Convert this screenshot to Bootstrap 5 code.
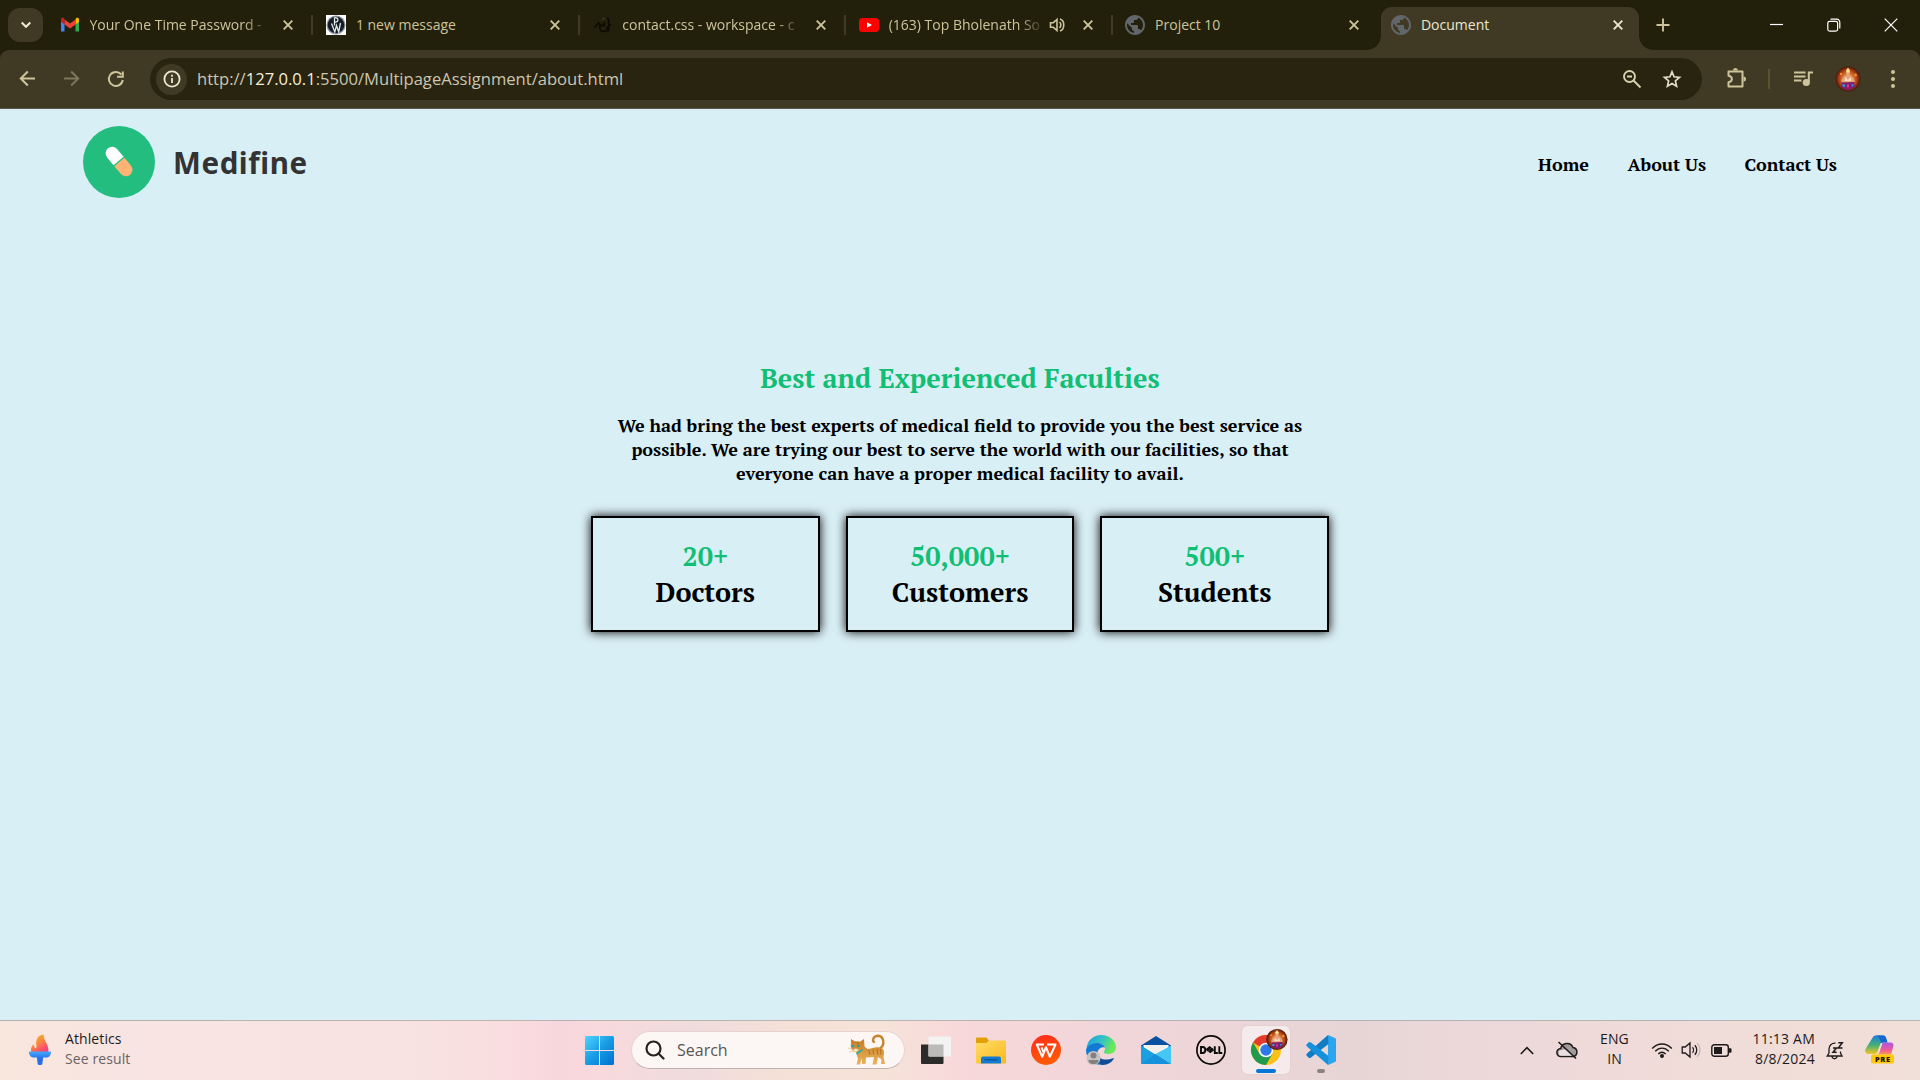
<!DOCTYPE html>
<html lang="en">
<head>
<meta charset="utf-8">
<title>Document</title>
<link href="https://cdn.jsdelivr.net/npm/bootstrap@5.3.0/dist/css/bootstrap.min.css" rel="stylesheet">
<style>
  body { font-family: "Open Sans", "Noto Sans", sans-serif; background: #d9eff6; width: 1920px; height: 1080px; overflow: hidden; }
  svg { display: block; flex: none; }
  /* browser chrome */
  .tab-strip { height: 50px; background: #22200b; color: #cdc49c; font-size: 14px; line-height: 20px; padding-left: 8px; }
  .tab-search { width: 35px; height: 34px; border-radius: 12px; background: #403a24; margin-right: 3px; }
  .browser-tab { width: 266.4px; height: 34px; padding: 0 14px 0 13.5px; position: relative; }
  .browser-tab.divided::after { content: ""; position: absolute; right: -1px; top: 7px; width: 2px; height: 20px; background: #403a24; }
  .tab-icon { width: 20px; height: 20px; margin-right: 10px; }
  .tab-title { height: 20px; white-space: nowrap; }
  .fade-end { -webkit-mask-image: linear-gradient(90deg, #000 calc(100% - 26px), transparent); mask-image: linear-gradient(90deg, #000 calc(100% - 26px), transparent); }
  .browser-tab.current { height: 43px; align-self: flex-end; margin-left: 3px; padding: 0 15px 7px 10px; width: 258px; background: #403a24; border-radius: 11px 11px 0 0; color: #ece6cf; }
  .browser-tab.current::before, .browser-tab.current::after { content: ""; position: absolute; bottom: 0; width: 14px; height: 14px; }
  .browser-tab.current::before { left: -14px; background: radial-gradient(circle at 0 0, transparent 13.5px, #403a24 14px); }
  .browser-tab.current::after { right: -14px; background: radial-gradient(circle at 100% 0, transparent 13.5px, #403a24 14px); }
  .window-btn { width: 57px; }
  .strip-back { background: #22200b; }
  .tool-row { height: 59px; background: #403a24; border-radius: 9px 9px 0 0; border-bottom: 1px solid #5b5646; padding-left: 7px; }
  .tool-btn { width: 44.5px; padding-right: 4px; }
  .nav-tools { width: 143px; }
  .address { width: 1552px; height: 42px; border-radius: 21px; background: #29240f; padding: 0 18px 0 6px; font-size: 16.6px; line-height: 24px; color: #cbc6b2; }
  .site-info { width: 31px; height: 31px; background: #403a24; margin-right: 10px; }
  .address b { font-weight: 400; color: #f4efd9; }
  /* page */
  .site { height: 911px; font-family: "PT Serif", "Liberation Serif", serif; font-weight: 700; color: #000; }
  .site-head { padding: 17px 83px 0; height: 107px; }
  .brand-name { font: 700 29.5px/40px "Noto Sans", "Open Sans", sans-serif; color: #333; margin-left: 18px; letter-spacing: .6px; padding-top: 1px; }
  .site-nav { gap: 38.5px; font-size: 18px; line-height: 24px; padding-top: 4px; margin-top: 22px; }
  .site-nav a { color: #000; text-decoration: none; }
  .faculty { width: 738.4px; padding-top: 144px; }
  .faculty h2, .stat-box { font-size: 27px; line-height: 36px; font-weight: 700; }
  .green { color: #10be74; }
  .faculty p { font-size: 18px; line-height: 24px; margin: 17px 10px 31px; }
  .stat-row { gap: 25.8px; }
  .stat-box { flex: 1 1 0; border: 2px solid #000; padding: 20px 0; box-shadow: 0 0 10px #000; }
  /* taskbar */
  .taskbar { height: 60px; border-top: 1px solid #bdb2b3; font-size: 14px; line-height: 20px; color: #1d1b1b; padding-bottom: 1px;
    background: linear-gradient(90deg, #f8e7dd 0, #f8e4e2 130px, #f8e3e2 400px, #fadfe0 480px, #f8d7dc 560px, #f8d9dc 600px, #f0dcdc 700px, #f5e0d8 780px, #f6e3d8 880px, #f8d8da 960px, #f1d6d9 1110px, #e7d5d6 1350px, #eed9da 1530px, #f0dcd8 1700px, #f1dfd9 1920px); }
  .two-line { padding-bottom: 2px; letter-spacing: .1px; }
  .widget-area { width: 577px; padding-left: 27px; }
  .app { width: 55px; height: 48px; position: relative; }
  .app-tile { width: 48px; background: #f5ebec; border-radius: 5px; margin: 0 3.5px; box-shadow: 0 0 1px #b9a9aa; }
  .app-run { position: absolute; bottom: 1px; height: 4px; border-radius: 2px; left: 50%; transform: translateX(-50%); }
  .search-pill { width: 274px; height: 38px; background: #fcf6f4; border: 1px solid #e6d3d1; border-bottom-color: #bfb2b1; margin: 0 3.5px 0 9px; padding: 0 18px 0 13px; font-size: 16px; color: #5a5656; }
</style>
<script src="https://cdn.jsdelivr.net/npm/bootstrap@5.3.0/dist/js/bootstrap.bundle.min.js"></script>
</head>
<body class="d-flex flex-column">
<svg width="0" height="0" class="position-absolute">
  <defs>
    <symbol id="x" viewBox="0 0 12 12"><path d="M1.700 1.700l8.600 8.600M10.300 1.700l-8.600 8.600" stroke="currentColor" stroke-width="1.900"/></symbol>
    <symbol id="globe" viewBox="0 0 24 24"><path d="M12 2C6.480 2 2 6.480 2 12s4.480 10 10 10 10-4.480 10-10S17.520 2 12 2zm-1 17.930c-3.950-.49-7-3.850-7-7.930 0-.62.080-1.210.210-1.790L9 15v1c0 1.100.9 2 2 2v1.930zm6.900-2.540c-.26-.81-1-1.390-1.900-1.390h-1v-3c0-.55-.45-1-1-1H8v-2h2c.55 0 1-.45 1-1V7h2c1.100 0 2-.9 2-2v-.41c2.930 1.190 5 4.060 5 7.410 0 2.080-.8 3.970-2.100 5.390z" fill="#62666b"/></symbol>
    <radialGradient id="ava"><stop offset="0" stop-color="#ffd28a"/><stop offset=".4" stop-color="#dc7b3c"/><stop offset=".75" stop-color="#a53c12"/><stop offset="1" stop-color="#46170a"/></radialGradient>
    <symbol id="avatar" viewBox="0 0 26 26"><circle cx="13" cy="13" r="12.500" fill="url(#ava)"/><path d="M13 3.500l2 3-.5 2.500 3.500 2.500 2 3.500-2 1.500H8L6 15l2-3.500L11.500 9 11 6.500z" fill="#e5a377"/><path d="M11 4.500l2-3 2 3-.5 2h-3z" fill="#ffe08a"/><path d="M10.500 11l2.500 3 2.500-3 1 4h-7z" fill="#fbd9c4"/><path d="M7 16.500l12-.5 1 5-7 3.500L6 21z" fill="#7c1c76"/><path d="M8 18l2.500 1-1 2-2.500-1zM16.500 18l2.500 1-2 2z" fill="#27a6cf"/><path d="M13 17.500l1.300 2.500-1.300 2.500-1.300-2.500z" fill="#e8337b"/><circle cx="6" cy="8" r="1.200" fill="#f28b1e"/><circle cx="20.500" cy="9" r="1.500" fill="#f28b1e"/></symbol>
  </defs>
</svg>

<header>
  <div class="tab-strip d-flex align-items-center">
    <div class="tab-search d-flex align-items-center justify-content-center"><svg width="12" height="8" viewBox="0 0 12 8"><path d="M1.700 1.500L6 5.800l4.300-4.300" fill="none" stroke="#efe9cf" stroke-width="2"/></svg></div>
    <div class="browser-tab divided d-flex align-items-center">
      <svg class="tab-icon" viewBox="0 0 20 20"><path d="M1 5v11.500h3.500V8z" fill="#4285f4"/><path d="M19 5v11.500h-3.500V8z" fill="#34a853"/><path d="M15.500 4.500v5L19 6.800V4.500c0-1.600-1.800-2.200-2.900-1.300z" fill="#fbbc04"/><path d="M4.500 9.500v-5L10 8.600l5.500-4.100v5L10 13.600z" fill="#ea4335"/><path d="M1 4.500v2.300l3.500 2.700v-5L3.900 3.200C2.800 2.300 1 2.900 1 4.500z" fill="#c5221f"/></svg>
      <div class="tab-title fade-end" style="width:180px">Your One Time Password -</div>
      <svg class="ms-auto me-1" width="12" height="12"><use href="#x"/></svg>
    </div>
    <div class="browser-tab divided d-flex align-items-center">
      <svg class="tab-icon" viewBox="0 0 20 20"><path d="M0 0h20v20H0z" fill="#fff"/><circle cx="10" cy="10" r="9.500" fill="#8c949b"/><circle cx="10" cy="10" r="8.300" fill="#141d25"/><path d="M8.500 10.500V2.800c4.500-1 4.500 5 .3 4.300M5.500 8.500L8.800 17l1.700-6.500 2.200 6.500L14.500 8" fill="none" stroke="#e4e9ec" stroke-width="1.300"/></svg>
      <div class="tab-title">1 new message</div>
      <svg class="ms-auto me-1" width="12" height="12"><use href="#x"/></svg>
    </div>
    <div class="browser-tab divided d-flex align-items-center">
      <svg class="tab-icon" viewBox="0 0 20 20"><path d="M2.500 12.500L6.500 8l2.500 3 2-1.500M8 10.500c-1 4 1 6.500 4 6 3-.5 3.500-2 3.500-5.500M12 12V7M15 3.500c2.500 0 1.500 2.500 1.500 4.500 0 1 .5 1.500 1.500 2-1 .5-1.500 1-1.500 2 0 2 1 4.500-1.500 4.500" fill="none" stroke="#0a0902" stroke-width="1.500"/><path d="M10.500 4.500L12.500 3" fill="none" stroke="#45423a" stroke-width="1.500"/></svg>
      <div class="tab-title fade-end" style="width:180px">contact.css - workspace - c</div>
      <svg class="ms-auto me-1" width="12" height="12"><use href="#x"/></svg>
    </div>
    <div class="browser-tab divided d-flex align-items-center">
      <svg class="tab-icon" viewBox="0 0 20 20"><rect y="3" width="20" height="14" rx="3.500" fill="#f00"/><path d="M8 7.200v5.600l5-2.800z" fill="#fff"/></svg>
      <div class="tab-title fade-end" style="width:156px">(163) Top Bholenath So</div>
      <svg class="ms-1" width="17" height="16" viewBox="0 0 17 16"><path d="M1.500 5.700h2.800L8 2.500v11L4.300 10.300H1.500zM10.500 5c1.800 1.500 1.800 4.500 0 6M11 2c5 1.500 5 10.500 0 12" fill="none" stroke="#cdc49c" stroke-width="1.600"/></svg>
      <svg class="ms-auto me-1" width="12" height="12"><use href="#x"/></svg>
    </div>
    <div class="browser-tab d-flex align-items-center">
      <svg class="tab-icon" viewBox="2 2 20 20"><use href="#globe" width="24" height="24"/></svg>
      <div class="tab-title">Project 10</div>
      <svg class="ms-auto me-1" width="12" height="12"><use href="#x"/></svg>
    </div>
    <div class="browser-tab current d-flex align-items-center">
      <svg class="tab-icon" viewBox="2 2 20 20"><use href="#globe" width="24" height="24"/></svg>
      <div class="tab-title">Document</div>
      <svg class="ms-auto" width="12" height="12"><use href="#x"/></svg>
    </div>
    <svg class="ms-3" width="16" height="16" viewBox="0 0 16 16"><path d="M8 1.500v13M1.500 8h13" stroke="#cdc49c" stroke-width="1.900"/></svg>
    <div class="d-flex ms-auto align-items-center" style="padding-right:1px">
      <div class="window-btn d-flex justify-content-center"><svg width="14" height="14"><path d="M0 6.500h13" stroke="#fff" stroke-width="1.200"/></svg></div>
      <div class="window-btn d-flex justify-content-center"><svg width="14" height="14" viewBox="0 0 14 14" fill="none" stroke="#fff" stroke-width="1.200"><rect x=".8" y="3.300" width="9.800" height="9.800" rx="1.800"/><path d="M3.500 1.200h6.300a3 3 0 0 1 3 3v6.300"/></svg></div>
      <div class="window-btn d-flex justify-content-center"><svg width="14" height="14"><path d="M.7.700l12.600 12.600M13.300.7L.7 13.300" stroke="#fff" stroke-width="1.200"/></svg></div>
    </div>
  </div>

  <div class="strip-back">
  <div class="tool-row d-flex align-items-center">
    <div class="nav-tools d-flex">
      <div class="tool-btn d-flex justify-content-center"><svg width="17" height="17" viewBox="0 0 17 17" fill="none" stroke="#cdc49c" stroke-width="2"><path d="M16 8.500H2M8.800 1.500l-7 7 7 7"/></svg></div>
      <div class="tool-btn d-flex justify-content-center"><svg width="17" height="17" viewBox="0 0 17 17" fill="none" stroke="#7d775c" stroke-width="2"><path d="M1 8.500h14M8.200 1.500l7 7-7 7"/></svg></div>
      <div class="tool-btn d-flex justify-content-center"><svg width="18" height="18" viewBox="0 0 18 18"><path d="M14.300 4.500A7 7 0 1 0 15.800 10" fill="none" stroke="#cdc49c" stroke-width="2"/><path d="M15.800 1.500V6.800H10" fill="none" stroke="#cdc49c" stroke-width="2"/></svg></div>
    </div>
    <div class="address d-flex align-items-center">
      <div class="site-info rounded-circle d-flex align-items-center justify-content-center"><svg width="18" height="18" viewBox="0 0 18 18"><circle cx="9" cy="9" r="7.600" fill="none" stroke="#ece6cf" stroke-width="1.800"/><path d="M9 8v5M9 4.800v2" stroke="#ece6cf" stroke-width="1.800"/></svg></div>
      <div class="text-nowrap">http://<b>127.0.0.1</b>:5500/MultipageAssignment/about.html</div>
      <svg class="ms-auto" width="20" height="20" viewBox="0 0 20 20" fill="none" stroke="#d8cfb0" stroke-width="1.900"><circle cx="7.500" cy="7.500" r="5.500"/><path d="M11.500 11.500l7 7M5 7.500h5"/></svg>
      <svg style="margin-left:20px;margin-right:2px" width="20" height="20" viewBox="0 0 20 20"><path d="M10 2.800l2.100 5 5.400.5-4.100 3.600 1.200 5.300L10 14.400l-4.600 2.800 1.200-5.300-4.100-3.600 5.400-.5z" fill="none" stroke="#e2dbc6" stroke-width="1.700"/></svg>
    </div>
    <svg style="margin-left:22px" width="24" height="24" viewBox="0 0 24 24"><path d="M4.500 4.500h14v15h-14v-4.300c4.500-.7 4.500-5.700 0-6.400z" fill="none" stroke="#cdc49c" stroke-width="2" stroke-linejoin="round"/><path d="M9 3.500a2.500 2.500 0 0 1 5 0zM19.500 9.500a2.500 2.500 0 0 1 0 5z" fill="#cdc49c"/></svg>
    <div style="width:2px;height:20px;margin-left:20px;background:#5b5433"></div>
    <svg style="margin-left:23px" width="20" height="18" viewBox="0 0 20 18" fill="none" stroke="#cdc49c" stroke-width="2"><path d="M1 2.500h11.500M1 6.500h11.500M1 10.500h7.500M15.800 12V2.500H20"/><circle cx="13.300" cy="12.500" r="2.600" fill="#cdc49c"/></svg>
    <svg style="margin-left:21.500px" width="26" height="26"><use href="#avatar"/></svg>
    <svg style="margin-left:29px" width="6" height="20" viewBox="0 0 6 20" fill="#cdc49c"><circle cx="3" cy="3" r="2"/><circle cx="3" cy="10" r="2"/><circle cx="3" cy="17" r="2"/></svg>
  </div>
  </div>
</header>

<main class="site">
  <div class="site-head d-flex align-items-start justify-content-between">
    <div class="d-flex align-items-center">
      <svg width="72" height="72" viewBox="0 0 72 72"><circle cx="36" cy="36" r="36" fill="#22bd7f"/><g transform="translate(36 35.500) rotate(50)"><path d="M-.7-6.600V6.600H-10.600a6.600 6.600 0 0 1 0-13.200z" fill="#fff"/><path d="M.5-6.600V6.600H10.600a6.600 6.600 0 0 0 0-13.200z" fill="#ffb476"/></g></svg>
      <span class="brand-name">Medifine</span>
    </div>
    <nav class="site-nav d-flex"><a href="#">Home</a><a href="#">About Us</a><a href="#">Contact Us</a></nav>
  </div>
  <section class="faculty mx-auto text-center">
    <h2 class="green mb-0">Best and Experienced Faculties</h2>
    <p>We had bring the best experts of medical field to provide you the best service as possible. We are trying our best to serve the world with our facilities, so that everyone can have a proper medical facility to avail.</p>
    <div class="stat-row d-flex">
      <div class="stat-box"><div class="green">20+</div><div>Doctors</div></div>
      <div class="stat-box"><div class="green">50,000+</div><div>Customers</div></div>
      <div class="stat-box"><div class="green">500+</div><div>Students</div></div>
    </div>
  </section>
</main>

<footer class="taskbar d-flex align-items-center">
  <div class="widget-area d-flex align-items-center">
    <svg width="26" height="32" viewBox="0 0 26 32"><defs><linearGradient id="fl" x1="0" y1="0" x2=".6" y2="1"><stop offset="0" stop-color="#f2b818"/><stop offset=".5" stop-color="#f98c3b"/><stop offset="1" stop-color="#f8407a"/></linearGradient><linearGradient id="cup" x1="0" y1="0" x2="0" y2="1"><stop offset="0" stop-color="#45a9f5"/><stop offset="1" stop-color="#2b79f3"/></linearGradient></defs><path d="M4.300 18c-.8-3 0-6 2.700-7.700l.3 2.700 1.700 1.500c.5-.5.600-1.500.4-2.500C8.500 6 10.500 1 16.800.800c-1 5.200 5.200 9.200 4.700 17.200z" fill="url(#fl)"/><path d="M9.700 22h6.600l-1 8c-.2 1.300-4.400 1.300-4.600 0z" fill="#256fe8"/><path d="M2 17.500h22c0 4-2 6-5 6H7c-3 0-5-2-5-6z" fill="url(#cup)"/></svg>
    <div class="two-line" style="margin-left:12px"><div>Athletics</div><div style="color:#696363">See result</div></div>
  </div>
  <div class="d-flex align-items-center justify-content-center" style="width:45px"><svg width="29" height="29" viewBox="0 0 29 29"><defs><linearGradient id="win" x1="0" y1="0" x2="1" y2="1"><stop offset="0" stop-color="#4ed5ff"/><stop offset=".5" stop-color="#189be4"/><stop offset="1" stop-color="#0070d1"/></linearGradient></defs><path d="M0 1.500A1.500 1.500 0 0 1 1.500 0H14v14H0zM15 0h12.500A1.500 1.500 0 0 1 29 1.500V14H15zM0 15h14v14H1.500A1.500 1.500 0 0 1 0 27.500zM15 15h14v12.500a1.500 1.500 0 0 1-1.500 1.500H15z" fill="url(#win)"/></svg></div>
  <div class="search-pill rounded-pill d-flex align-items-center">
    <svg width="20" height="20" viewBox="0 0 20 20" fill="none" stroke="#242222" stroke-width="2.200"><circle cx="8.500" cy="8.500" r="7"/><path d="M13.500 13.500l5 5" stroke-linecap="round"/></svg>
    <span style="margin-left:12px">Search</span>
    <svg class="ms-auto" width="38" height="32" viewBox="0 0 38 32"><defs><linearGradient id="cat" x1="0" y1="0" x2="0" y2="1"><stop offset="0" stop-color="#c97a20"/><stop offset="1" stop-color="#e9b45f"/></linearGradient></defs><path d="M31.500 15c6-4 4.500-13-1.500-13.300-3 0-5.300 2-5 5.300l1 1" fill="none" stroke="#c5842d" stroke-width="2.400" stroke-linecap="round"/><path d="M3 5l4.500 2.700h4.500L16 5l.5 7.500 3 2.500c4.500 0 8.500-3 14-1 3 1.500 3 5 2 8.500l1.500 7.500h-4l.5-4.500-3.500-2.500-1.500 7.500h-4l1.500-7.500-8 .5-.5 6.500h-3.500l-.3-6-1.700 6.500H8.500l1.500-6c-1.500-3-1-5-1.500-6-4.500-1-6.500-5-5.500-9z" fill="url(#cat)"/><path d="M21 16l1 5M25 15.500l.7 5M29 15l1 6M32.500 15l.5 6M10 7v3.500M8 7.200V9" stroke="#a8671a" stroke-width=".8"/><circle cx="5" cy="12" r="1.300" fill="#19a5a8"/><circle cx="10.500" cy="12" r="1.300" fill="#19a5a8"/><path d="M4.500 16L8 14.500l3 1.500-3.500 2z" fill="#fae3bf"/><path d="M8.500 20l6-4.500" stroke="#1fb3a9" stroke-width="1.600"/><path d="M6 15.500L0 14M6 16.500l-5 1.500" stroke="#d7b68a" stroke-width=".6"/></svg>
  </div>
  <div class="app d-flex align-items-center justify-content-center"><svg width="30" height="30" viewBox="0 0 30 30"><path d="M0 9.500h22.500V28a1 1 0 0 1-1 1H1a1 1 0 0 1-1-1z" fill="#2b2b29"/><rect x="7.500" y="1.500" width="22.500" height="20" rx="1" fill="#f4f3f3"/><path d="M7.500 9.500h15v12h-15z" fill="#bdbbba"/></svg></div>
  <div class="app d-flex align-items-center justify-content-center"><svg width="30" height="30" viewBox="0 0 30 30"><defs><linearGradient id="fo" x1="0" y1="0" x2="1" y2="1"><stop offset="0" stop-color="#ffdc68"/><stop offset="1" stop-color="#fbb91c"/></linearGradient></defs><path d="M0 3.500a1 1 0 0 1 1-1h9.500l2.500 3-2.500 3.500H0z" fill="#e0a008"/><path d="M0 8h10l3-2.500h16a1 1 0 0 1 1 1V27.500a1 1 0 0 1-1 1H1a1 1 0 0 1-1-1z" fill="url(#fo)"/><path d="M5 28.500v-5a2 2 0 0 1 2-2h16a2 2 0 0 1 2 2v5z" fill="#137cd0"/><path d="M8.500 24.800h13" stroke="#0b4f99" stroke-width="1.200"/></svg></div>
  <div class="app d-flex align-items-center justify-content-center"><svg width="30" height="30" viewBox="0 0 30 30"><defs><linearGradient id="wp" x1="0" y1="0" x2=".3" y2="1"><stop offset="0" stop-color="#ff2a1c"/><stop offset="1" stop-color="#ff5a06"/></linearGradient></defs><circle cx="15" cy="15" r="15" fill="url(#wp)"/><path d="M13 9.500H5.800l5.400 12.300 3.800-9.600 3.800 9.600 5.700-12.300H16M10.500 12.500l2.500 5.500" fill="none" stroke="#fff" stroke-width="2" stroke-linejoin="round"/></svg></div>
  <div class="app d-flex align-items-center justify-content-center"><svg width="30" height="30" viewBox="0 0 30 30"><defs><linearGradient id="eg" x1="0" y1="0" x2="1" y2=".35"><stop offset="0" stop-color="#1b9de2"/><stop offset=".55" stop-color="#35c1c4"/><stop offset="1" stop-color="#6aeb55"/></linearGradient></defs><path d="M.500 14C1 5 8 0 15 0c9 0 15 6 15 12 0 5-4 7-7.500 7-3 0-4.500-1-4.500-2 0-1 1-1.500 1-3.500 0-2.500-3-5-7-5-5 0-9 2-11.500 5.500z" fill="url(#eg)"/><path d="M0 15c1-4 6-7 11-7 3 0 7 1.500 8 4.500-4-1-8 2-7.500 6.500.5 5 4 9 8 10C10 32 0 26 0 15z" fill="#1479d2"/><path d="M11.500 18c.5 5 5 7 10 6.500 3 0 5-1.500 6.500-1.500-1.500 4-6 7-11.500 7-4-1-7-7-5-12z" fill="#124d99"/><circle cx="7.500" cy="23" r="7" fill="#c7c3c2"/><circle cx="7.500" cy="20.500" r="3" fill="#858080"/><path d="M2.500 25h10c0 3-2 4-5 4s-5-1-5-4z" fill="#858080"/></svg></div>
  <div class="app d-flex align-items-center justify-content-center"><svg width="30" height="30" viewBox="0 0 30 30"><path d="M0 10.500L15 1l15 9.500V14H0z" fill="#0a50a0"/><path d="M2.500 10h25v10h-25z" fill="#fff"/><path d="M2.500 10h25L15 19z" fill="#f1eeee"/><path d="M0 10.500L30 29H1a1 1 0 0 1-1-1z" fill="#1b9fe3"/><path d="M30 10.500v18.300L14.500 19z" fill="#45c6f3"/><path d="M0 29l14.500-10L30 29z" fill="#1692dc"/></svg></div>
  <div class="app d-flex align-items-center justify-content-center"><svg width="30" height="30" viewBox="0 0 30 30" fill="none" stroke="#0b0b0b"><circle cx="15" cy="15" r="14.100" stroke-width="1.700"/><path d="M5 12h1.700c3.400 0 3.400 6 0 6H5zM18.800 11.200V18h3M23.300 11.200V18h3" stroke-width="1.900"/><path d="M9.300 15.200l4.300-3.500 1 .8-3.400 2.800.9.800 3.600-2.900 1 .8-3.400 2.800.9.700 3.600-2.800" stroke-width="1.100"/></svg></div>
  <div class="app app-tile d-flex align-items-center justify-content-center">
    <svg width="38" height="38" viewBox="0 0 38 38" overflow="visible"><g transform="translate(4 4)"><circle cx="15" cy="15" r="15" fill="#fbc116"/><path d="M15 15L2 7.500A15 15 0 0 1 28 7.500z" fill="#e33b2e"/><path d="M15 0a15 15 0 0 1 13 7.500H15z" fill="#e33b2e"/><path d="M2 7.500A15 15 0 0 0 15 30l6.500-11.300L15 15 8.500 18.800z" fill="#219a4b"/><circle cx="15" cy="15" r="7.300" fill="#fff"/><circle cx="15" cy="15" r="5.700" fill="#2f78ea"/></g><use href="#avatar" x="19" y="-2.500" width="22" height="22"/></svg>
    <span class="app-run" style="width:20px;background:#0577d4"></span>
  </div>
  <div class="app d-flex align-items-center justify-content-center">
    <svg width="30" height="30" viewBox="0 0 30 30"><path d="M22 0l7 3a1.500 1.500 0 0 1 1 1.500v21a1.500 1.500 0 0 1-1 1.500l-7 3z" fill="#2ba5ee"/><path d="M22 0L1 18.500c-1 1-1 1.500 0 2.500l1.500 1.500c1 .7 1.500.7 2.500 0L22.500 9z" fill="#0f7cc4"/><path d="M22 30L1 11.500c-1-1-1-1.500 0-2.500l1.500-1.500c1-.7 1.500-.7 2.500 0L22.500 21z" fill="#1590dc"/></svg>
    <span class="app-run" style="width:8px;background:#8b8283"></span>
  </div>

  <div class="d-flex align-items-center ms-auto" style="padding-right:25px">
    <div class="d-flex justify-content-center" style="width:30px"><svg width="14" height="9" viewBox="0 0 14 9"><path d="M.8 8L7 1.600 13.200 8" fill="none" stroke="#1d1b1b" stroke-width="1.600"/></svg></div>
    <div class="d-flex justify-content-center" style="width:40px;margin-left:5px"><svg width="22" height="20" viewBox="0 0 22 20"><path d="M5 16.500a4 4 0 0 1-.3-8A6.500 6.500 0 0 1 17 7.500a4.600 4.600 0 0 1 .5 9z" fill="#a29c9d" stroke="#1d1b1b" stroke-width="1.500"/><path d="M5 15.700c-3 0-3.500-5.200 0-5.700l5.500-1 7 6.700z" fill="#e8e0e0"/><path d="M2.500 2L20 18.500" stroke="#1d1b1b" stroke-width="1.600"/></svg></div>
    <div class="two-line text-center" style="width:48px;margin-left:4px"><div>ENG</div><div>IN</div></div>
    <div class="d-flex justify-content-center" style="width:26px;margin-left:10px"><svg width="22" height="18" viewBox="0 0 22 18" fill="none" stroke="#1d1b1b" stroke-width="1.400"><path d="M1.200 7.500c5.500-6 14-6 19.600 0M4.200 10.300c4-4.200 9.600-4.200 13.600 0M7.300 13c2.300-2.300 5-2.300 7.400 0"/><circle cx="11" cy="15" r="1.300" fill="#1d1b1b"/></svg></div>
    <div class="d-flex justify-content-center" style="width:26px;margin-left:3px"><svg width="20" height="18" viewBox="0 0 20 18" fill="none" stroke="#1d1b1b" stroke-width="1.300"><path d="M1.200 6h3L9 2v14l-4.800-4h-3zM11.500 6.300c1.300 1.500 1.300 4 0 5.400M13.800 4.200c2.600 2.500 2.600 7 0 9.600"/><path d="M16.200 2.200c3.700 3.700 3.700 10 0 13.600" stroke="#c3b6b5"/></svg></div>
    <div class="d-flex justify-content-center" style="width:26px;margin-left:5px"><svg width="21" height="13" viewBox="0 0 21 13"><rect x=".8" y=".8" width="16.500" height="11.400" rx="2.500" fill="none" stroke="#1d1b1b" stroke-width="1.400"/><path d="M3 3h8v7H3zM18 4.300h1.500a1 1 0 0 1 1 1v2.400a1 1 0 0 1-1 1H18z" fill="#1d1b1b"/></svg></div>
    <div class="two-line text-end text-nowrap" style="width:70px;margin-left:10.500px;letter-spacing:.22px"><div>11:13 AM</div><div>8/8/2024</div></div>
    <div class="d-flex justify-content-center" style="width:26px;margin-left:7px"><svg width="18" height="19" viewBox="0 0 18 19" fill="none" stroke="#1d1b1b" stroke-width="1.300"><path d="M9.500 2.200C5.500 2 3 4.500 3 8v4L1.200 15H16l-1.500-3v-1.500M6 15.500c.5 3 4.500 3 5 0"/><path d="M7 7h3.500L7 11.300h3.700M12.300 1.700h4L12.300 7h4.200" stroke-width="1.500"/></svg></div>
    <svg style="margin-left:17px" width="30" height="30" viewBox="0 0 30 30"><defs><linearGradient id="c1" x1="0" y1="0" x2="0" y2="1"><stop offset="0" stop-color="#1e7fe0"/><stop offset=".5" stop-color="#3fae7a"/><stop offset="1" stop-color="#f5c520"/></linearGradient><linearGradient id="c2" x1="0" y1="0" x2="0" y2="1"><stop offset="0" stop-color="#a657e6"/><stop offset=".6" stop-color="#ee5a9b"/><stop offset="1" stop-color="#fb9457"/></linearGradient></defs><path d="M8 2c.7-1 1.600-1.500 3-1.500h7c2 0 2.500 1 3 2.500l1.500 4.500H18c-2 0-2.700 1-3.300 3l-2 6c-.5 1.500-1.500 2.500-3 2.500H4c-3 0-4.500-1.500-3.500-5z" fill="url(#c1)"/><path d="M10 .5h8c2 0 2.500 1 3 2.500l1.500 4.500H18l-2 .5c-1-4-2-7-6-7.500z" fill="#1566cf"/><path d="M18.500 7.500H25c3 0 4 1.500 3.300 4L26 19.500H12c1.500-.5 2.200-1.500 2.700-3l2-6c.3-1.500.8-3 1.800-3z" fill="url(#c2)"/><rect x="6" y="19.500" width="23" height="9" rx="2" fill="#ffc907"/><text x="17.800" y="26.800" text-anchor="middle" font-size="7.500" font-weight="800" letter-spacing=".5" fill="#1d1505">PRE</text></svg>
  </div>
</footer>
</body>
</html>
